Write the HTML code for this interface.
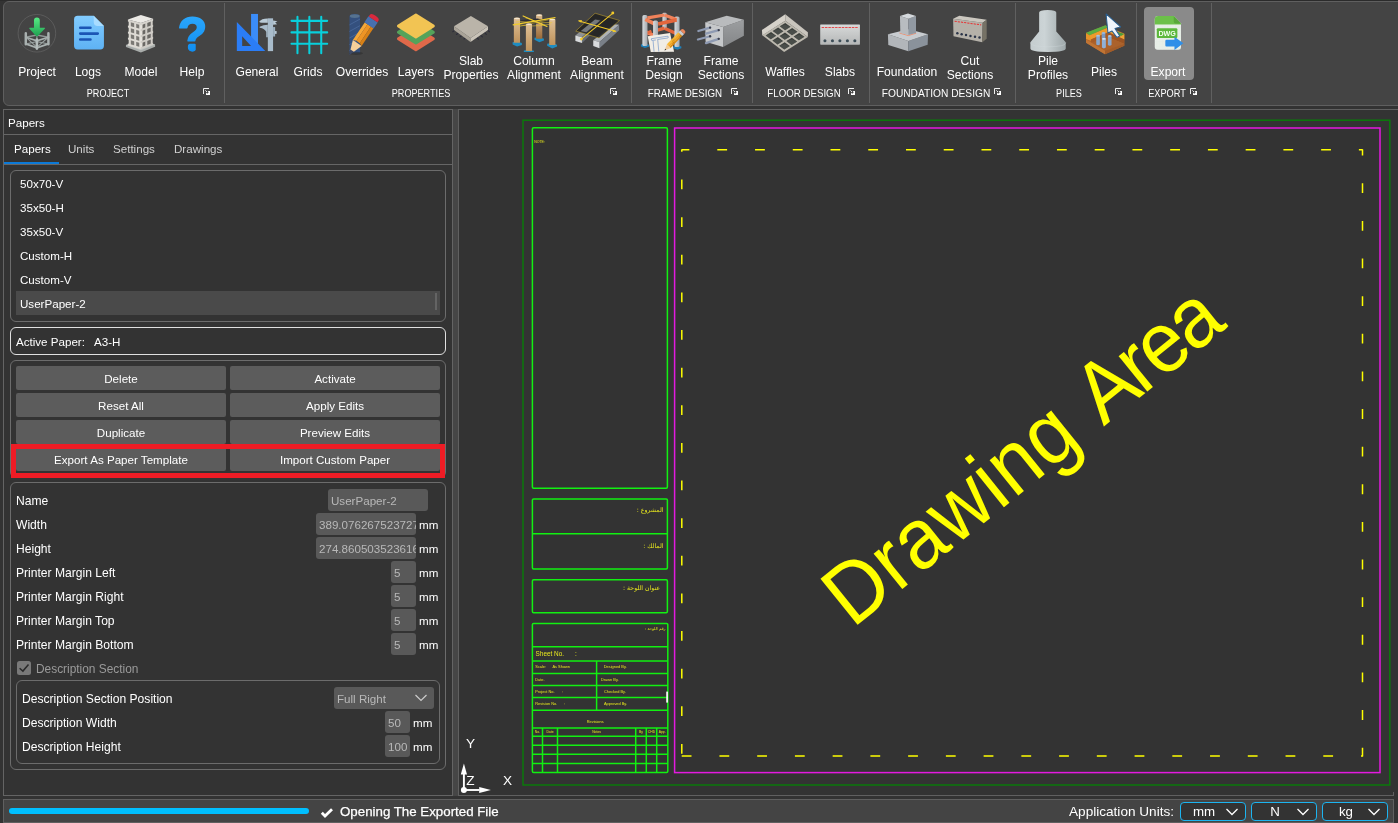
<!DOCTYPE html><html><head><meta charset="utf-8"><title>Papers</title><style>
*{box-sizing:border-box;margin:0;padding:0}
html,body{width:1398px;height:823px;overflow:hidden;background:#333;}
body{position:relative;font-family:"Liberation Sans",sans-serif;font-size:11.6px;color:#fff;}
#root{position:absolute;left:0;top:0;width:1398px;height:823px;will-change:transform}
.abs{position:absolute}
.t{position:absolute;white-space:nowrap;line-height:14px;height:14px}
.c{text-align:center}
.ribbon{position:absolute;left:3px;top:1px;width:1420px;height:105px;background:#444;border:1px solid #5f5f5f;border-radius:6px}
.sep{position:absolute;top:3px;width:1px;height:100px;background:#606060}
.rl{position:absolute;white-space:nowrap;text-align:center;line-height:14px;font-size:12.1px;color:#fff;transform:translateX(-50%)}
.gl{position:absolute;white-space:nowrap;text-align:center;line-height:14px;font-size:10.6px;color:#fff;transform:translateX(-50%) scaleX(0.925);top:86px}
.ico{position:absolute}
.panel{position:absolute;left:3px;top:109px;width:450px;height:687px;border:1px solid #646464;background:#333}
.grp{position:absolute;border:1px solid #6c6c6c;border-radius:6px}
.btn{position:absolute;background:#5c5c5c;border-radius:2px;height:24px;text-align:center;line-height:25px;font-size:11.6px;white-space:nowrap}
.inp{position:absolute;background:#595959;border-radius:3px;height:22px;line-height:23px;color:#b8b8b8;padding-left:3px;overflow:hidden;white-space:nowrap;font-size:11.6px}
.lbl{position:absolute;white-space:nowrap;line-height:14px;font-size:11.6px}
</style></head><body><div id="root">
<div class="abs" style="left:0;top:0;width:1398px;height:1px;background:#2b2b2b"></div>
<div class="ribbon"></div>
<div class="sep" style="left:224px"></div>
<div class="sep" style="left:631px"></div>
<div class="sep" style="left:752px"></div>
<div class="sep" style="left:869px"></div>
<div class="sep" style="left:1015px"></div>
<div class="sep" style="left:1136px"></div>
<div class="sep" style="left:1211px"></div>
<div class="abs" style="left:1144px;top:7px;width:50px;height:73px;background:#8a8a8a;border-radius:4px"></div>
<div class="rl" style="left:37px;top:65px">Project</div>
<div class="rl" style="left:88px;top:65px">Logs</div>
<div class="rl" style="left:141px;top:65px">Model</div>
<div class="rl" style="left:192px;top:65px">Help</div>
<div class="rl" style="left:257px;top:65px">General</div>
<div class="rl" style="left:308px;top:65px">Grids</div>
<div class="rl" style="left:362px;top:65px">Overrides</div>
<div class="rl" style="left:416px;top:65px">Layers</div>
<div class="rl" style="left:471px;top:53.5px">Slab<br>Properties</div>
<div class="rl" style="left:534px;top:53.5px">Column<br>Alignment</div>
<div class="rl" style="left:597px;top:53.5px">Beam<br>Alignment</div>
<div class="rl" style="left:664px;top:53.5px">Frame<br>Design</div>
<div class="rl" style="left:721px;top:53.5px">Frame<br>Sections</div>
<div class="rl" style="left:785px;top:65px">Waffles</div>
<div class="rl" style="left:840px;top:65px">Slabs</div>
<div class="rl" style="left:907px;top:65px">Foundation</div>
<div class="rl" style="left:970px;top:53.5px">Cut<br>Sections</div>
<div class="rl" style="left:1048px;top:53.5px">Pile<br>Profiles</div>
<div class="rl" style="left:1104px;top:65px">Piles</div>
<div class="rl" style="left:1168px;top:65px">Export</div>
<svg class="abs" style="left:0;top:0" width="1398" height="106" viewBox="0 0 1398 106"><defs>
<linearGradient id="gGreen" x1="0" y1="0" x2="0" y2="1"><stop offset="0" stop-color="#56ec84"/><stop offset="1" stop-color="#1f9f50"/></linearGradient>
<linearGradient id="gDoc" x1="0" y1="0" x2="0" y2="1"><stop offset="0" stop-color="#82ccff"/><stop offset="1" stop-color="#5eb2f4"/></linearGradient>
<linearGradient id="gHelp" x1="0" y1="0" x2="0" y2="1"><stop offset="0" stop-color="#30acff"/><stop offset="1" stop-color="#0a88ee"/></linearGradient>
<linearGradient id="gWood" x1="0" y1="0" x2="0" y2="1"><stop offset="0" stop-color="#dfc197"/><stop offset="1" stop-color="#bf935c"/></linearGradient>
<linearGradient id="gWoodD" x1="0" y1="0" x2="0" y2="1"><stop offset="0" stop-color="#dcbc90"/><stop offset="1" stop-color="#9a6a38"/></linearGradient>
<linearGradient id="gSteel" x1="0" y1="0" x2="1" y2="0"><stop offset="0" stop-color="#d9dde0"/><stop offset="1" stop-color="#a4a8ad"/></linearGradient>
<linearGradient id="gConcR" x1="0" y1="0" x2="0" y2="1"><stop offset="0" stop-color="#9c9ea0"/><stop offset="1" stop-color="#848688"/></linearGradient>
<linearGradient id="gSlab" x1="0" y1="0" x2="0" y2="1"><stop offset="0" stop-color="#d8dada"/><stop offset="1" stop-color="#b4b6b6"/></linearGradient>
<linearGradient id="gPile" x1="0" y1="0" x2="1" y2="0"><stop offset="0" stop-color="#c4ccce"/><stop offset=".4" stop-color="#ccd4d6"/><stop offset="1" stop-color="#9ea8aa"/></linearGradient>
</defs><g transform="translate(7 3) scale(0.072904)"><circle cx="410" cy="415" r="258" fill="none" stroke="#636363" stroke-width="10"/><g stroke="#a9b1b0" stroke-width="28" stroke-linecap="round" fill="none"><path d="M258 470L410 440L568 470" stroke="#8f9796" stroke-width="20"/><path d="M410 440V520" stroke="#8f9796" stroke-width="18"/><path d="M258 470L410 520L568 470" stroke-width="24"/><path d="M258 560L410 615L568 560" stroke-width="24"/><path d="M270 480L400 600M400 530L270 560M420 530L555 560M555 480L420 600" stroke-width="14" stroke="#9aa2a1"/><path d="M258 415V565M568 415V565" stroke-width="34"/><path d="M410 500V625" stroke-width="36" stroke="#b4bcbb"/></g><path d="M370 240a40 40 0 0 1 80 0V338H512Q530 338 518 352L422 452Q410 464 398 452L308 352Q296 338 314 338H370Z" fill="url(#gGreen)"/></g>
<g transform="translate(58 3) scale(0.072904)"><path d="M270 175H490L630 315V588a50 50 0 0 1 -50 50H270a50 50 0 0 1 -50 -50V225a50 50 0 0 1 50 -50Z" fill="url(#gDoc)"/><path d="M490 175L630 315H545Q490 315 490 260Z" fill="#a8dcff"/><g stroke="#1b55b5" stroke-width="36" stroke-linecap="round"><path d="M305 340H445M305 420H545M305 500H445"/></g></g>
<g transform="translate(111 3) scale(0.072904)"><polygon points="205,575 410,520 605,570 605,600 410,678 205,605" fill="#a9adab" /><polygon points="205,575 410,520 605,570 410,648" fill="#c0c4c2" /><polygon points="245,240 410,290 410,622 245,572" fill="#7a7874" /><polygon points="410,290 568,232 568,562 410,622" fill="#6a6864" /><polygon points="243,243.08988764044943 272,251.08988764044943 272,581.0898876404494 243,573.0898876404494" fill="#dddad4" /><polygon points="318,264.1573033707865 346,272.1573033707865 346,602.1573033707865 318,594.1573033707865" fill="#dddad4" /><polygon points="470,268.57142857142856 498,258.57142857142856 498,588.5714285714286 470,598.5714285714286" fill="#cfccc6" /><polygon points="545,241.78571428571428 572,231.78571428571428 572,561.7857142857142 545,571.7857142857142" fill="#cfccc6" /><polygon points="388,284 410,290 432,282 432,614 410,622 388,614" fill="#e4e1db" /><polygon points="232,308 410,358 410,386 232,336" fill="#dddad4" /><polygon points="410,358 578,298 578,326 410,386" fill="#cfccc6" /><polygon points="232,392 410,442 410,470 232,420" fill="#dddad4" /><polygon points="410,442 578,382 578,410 410,470" fill="#cfccc6" /><polygon points="232,474 410,524 410,552 232,502" fill="#dddad4" /><polygon points="410,524 578,464 578,492 410,552" fill="#cfccc6" /><polygon points="232,556 410,606 410,634 232,584" fill="#dddad4" /><polygon points="410,606 578,546 578,574 410,634" fill="#cfccc6" /><polygon points="232,225 410,275 578,215 578,245 410,305 232,255" fill="#d6d3cd" /><polygon points="410,165 232,225 410,275 578,215" fill="#ebe9e5" /></g>
<clipPath id="cHelp"><rect x="170" y="5" width="45" height="36.5"/><circle cx="192.4" cy="47.1" r="4.6"/></clipPath><text x="192.5" y="50.7" font-family="Liberation Sans, sans-serif" font-weight="bold" font-size="48" text-anchor="middle" fill="url(#gHelp)" stroke="url(#gHelp)" stroke-width="1.8" stroke-linejoin="round" clip-path="url(#cHelp)">?</text>
<g transform="translate(227 3) scale(0.072904)"><rect x="330" y="150" width="95" height="460" fill="#3b8cf8"/><path d="M135 260V660H525Z M208 455L330 590H208Z" fill="#2b7df6" fill-rule="evenodd"/><rect x="560" y="210" width="72" height="450" fill="#a9bccb"/><path d="M442 258Q470 212 560 212V272H475Q448 272 442 258Z" fill="#b9cad6"/><path d="M448 325Q500 298 560 298V470H538V395Q520 350 448 338Z" fill="#a9bccb"/><path d="M632 240L692 252L660 268L688 290L632 300Z" fill="#b9cad6"/><rect x="632" y="330" width="28" height="130" fill="#9db1c1"/><rect x="655" y="385" width="26" height="38" fill="#b9cad6"/></g>
<g transform="translate(278 3) scale(0.072904)"><g stroke="#08d0dc" stroke-width="28" stroke-linecap="round"><path d="M267 190V690M430 190V690M593 190V690M185 245H675M185 403H675M185 560H675"/></g></g>
<g transform="translate(332 3) scale(0.072904)"><path d="M240 185Q240 150 312 150Q385 150 385 185V690H240Z" fill="#34507e"/><ellipse cx="312" cy="180" rx="68" ry="26" fill="#56728f"/><g stroke="#4a689a" stroke-width="12" fill="none"><path d="M240 300L385 220M240 390L385 310M240 480L385 400M240 570L385 490M240 650L385 575"/></g><ellipse cx="330" cy="690" rx="95" ry="22" fill="#2e2e2e" opacity=".6"/><g transform="translate(235 715) rotate(33.8)"><polygon points="0,0 -28,-75 28,-75" fill="#3f4964"/><polygon points="-28,-75 28,-75 72,-200 -72,-200" fill="#f6cf9a"/><polygon points="-72,-200 -26,-218 -26,-492 -72,-492" fill="#f7a838"/><polygon points="-26,-218 30,-218 30,-492 -26,-492" fill="#ee9424"/><polygon points="30,-218 72,-200 72,-492 30,-492" fill="#d98116"/><rect x="-76" y="-590" width="152" height="100" fill="#4870ae"/><path d="M-72 -590V-615Q-72 -652 0 -652Q72 -652 72 -615V-590Z" fill="#d9293d"/></g></g>
<g transform="translate(386 3) scale(0.072904)"><path d="M410 340L650 490L410 640L170 490Z" fill="#e0694a" stroke="#e0694a" stroke-width="40" stroke-linejoin="round"/><path d="M410 250L650 400L410 550L170 400Z" fill="#55a35a" stroke="#55a35a" stroke-width="40" stroke-linejoin="round"/><path d="M410 165L650 315L410 465L170 315Z" fill="#f2c453" stroke="#f2c453" stroke-width="40" stroke-linejoin="round"/></g>
<g transform="translate(441 3) scale(0.072904)"><line x1="190" y1="372" x2="160" y2="395" stroke="#2c2c3a" stroke-width="14" stroke-linecap="round"/><line x1="243" y1="408" x2="212" y2="432" stroke="#2c2c3a" stroke-width="14" stroke-linecap="round"/><line x1="295" y1="440" x2="263" y2="463" stroke="#2c2c3a" stroke-width="14" stroke-linecap="round"/><line x1="348" y1="472" x2="316" y2="494" stroke="#2c2c3a" stroke-width="14" stroke-linecap="round"/><line x1="640" y1="372" x2="665" y2="395" stroke="#2c2c3a" stroke-width="14" stroke-linecap="round"/><line x1="598" y1="408" x2="622" y2="430" stroke="#2c2c3a" stroke-width="14" stroke-linecap="round"/><line x1="545" y1="443" x2="568" y2="465" stroke="#2c2c3a" stroke-width="14" stroke-linecap="round"/><line x1="492" y1="475" x2="514" y2="497" stroke="#2c2c3a" stroke-width="14" stroke-linecap="round"/><polygon points="178,320 405,480 405,535 178,370" fill="#a9a398" /><polygon points="405,480 645,320 645,370 405,535" fill="#c9c3b8" /><polygon points="410,180 178,320 405,480 645,320" fill="#bab4a9" /></g>
<g transform="translate(504 3) scale(0.072904)"><polygon points="418,478 480,465 548,490 548,515 485,540 418,505" fill="#1f8cc0" /><path d="M440 167Q440 155 482.5 155Q525 155 525 167V490H440Z" fill="url(#gWoodD)"/><ellipse cx="482.5" cy="167" rx="38.5" ry="10" fill="#f3e6d0"/><polygon points="210,238 455,212 645,250 385,292" fill="#2c2c34" /><polygon points="118,540 180,528 245,548 245,575 180,598 118,570" fill="#1f8cc0" /><path d="M135 212Q135 200 177.5 200Q220 200 220 212V545H135Z" fill="url(#gWood)"/><ellipse cx="177.5" cy="212" rx="38.5" ry="10" fill="#f3e6d0"/><polygon points="592,560 660,548 728,572 728,598 662,625 592,588" fill="#1f8cc0" /><path d="M620 227Q620 215 662.5 215Q705 215 705 227V575H620Z" fill="url(#gWood)"/><ellipse cx="662.5" cy="227" rx="38.5" ry="10" fill="#f3e6d0"/><g stroke="#f0cc30" stroke-linecap="round" fill="none"><path d="M125 300L700 200" stroke-width="16"/><path d="M262 178L590 322" stroke-width="16"/><path d="M170 255L655 268M215 320L600 232M300 205L560 300M150 290Q400 340 640 290" stroke-width="7"/></g><polygon points="272,650 340,640 410,655 410,672 272,672" fill="#1f8cc0" /><path d="M300 292Q300 280 342.5 280Q385 280 385 292V660H300Z" fill="url(#gWood)"/><ellipse cx="342.5" cy="292" rx="38.5" ry="10" fill="#f3e6d0"/></g>
<g transform="translate(567 3) scale(0.072904)"><polygon points="115,445 395,215 470,230 205,470" fill="#8e9296" /><polygon points="205,470 470,230 470,300 205,550" fill="#666c74" /><polygon points="115,445 205,470 205,550 115,520" fill="#d9dbdd" /><polygon points="360,510 640,290 715,300 445,535" fill="#aeb2b6" /><polygon points="445,535 715,300 715,375 445,620" fill="#7a8088" /><polygon points="360,510 445,535 445,620 360,590" fill="#d9dbdd" /><polygon points="385,140 720,240 440,480 120,385" fill="#222" fill-opacity=".88" stroke="#e4bc2c" stroke-width="6"/><polygon points="190,385 385,225 455,240 265,400" fill="#8e9296" opacity=".75"/><g stroke="#f2ca2a" stroke-width="14" stroke-linecap="round"><path d="M195 495L630 138M165 248L665 388"/></g><polygon points="150,240 205,232 195,270" fill="#f2ca2a"/><polygon points="680,392 625,400 635,362" fill="#f2ca2a"/><circle cx="628" cy="138" r="20" fill="#f2ca2a"/><circle cx="198" cy="495" r="18" fill="#f2ca2a"/></g>
<g transform="translate(634 3) scale(0.072904)"><rect x="390" y="135" width="60" height="220" rx="20" fill="url(#gSteel)"/><g stroke-linecap="butt"><path d="M425 350L570 415" stroke="#e4663c" stroke-width="48"/><path d="M320 372L420 345" stroke="#e4663c" stroke-width="48"/><path d="M160 395L270 445" stroke="#f0825a" stroke-width="48"/><path d="M160 420L240 385" stroke="#e4663c" stroke-width="40"/></g><polygon points="95,570 150,555 205,572 205,600 150,618 95,598" fill="#1f7fb8" /><polygon points="540,592 595,578 650,596 650,622 595,642 540,620" fill="#1f7fb8" /><rect x="115" y="165" width="70" height="425" rx="22" fill="url(#gSteel)"/><rect x="555" y="185" width="70" height="420" rx="22" fill="url(#gSteel)"/><g><path d="M185 205L420 165" stroke="#f0825a" stroke-width="44"/><path d="M425 168L585 228" stroke="#f0825a" stroke-width="44"/><path d="M155 225L295 292" stroke="#f0825a" stroke-width="52"/><path d="M330 288L585 232" stroke="#e4663c" stroke-width="52"/></g><rect x="262" y="240" width="68" height="230" rx="22" fill="url(#gSteel)"/><polygon points="188,457 495,410 550,668 230,672" fill="#f1ede5" /><g stroke="#4a78c0" stroke-width="7" fill="none"><path d="M235 490L465 455Q478 470 465 480L325 500L340 665M240 495Q232 510 245 515L300 507M262 520L275 668"/></g><g transform="translate(418 652) rotate(44)"><polygon points="0,0 -12,-28 12,-28" fill="#3a3a3a"/><polygon points="-12,-28 12,-28 36,-85 -36,-85" fill="#f3cc98"/><rect x="-36" y="-315" width="24" height="230" fill="#f8b830"/><rect x="-12" y="-315" width="26" height="230" fill="#f3a41a"/><rect x="14" y="-315" width="22" height="230" fill="#dc8c10"/><rect x="-37" y="-350" width="74" height="38" fill="#c9cdd2"/><path d="M-36 -350V-368Q-36 -392 0 -392Q36 -392 36 -368V-350Z" fill="#ea865a"/></g></g>
<g transform="translate(691 3) scale(0.072904)"><polygon points="195,265 440,330 440,605 200,530" fill="#c6c8ca" /><polygon points="440,330 725,230 725,450 440,605" fill="url(#gConcR)" /><polygon points="195,265 490,175 725,230 440,330" fill="#b9bbbd" /><line x1="100" y1="385" x2="262" y2="338" stroke="#8e9ab2" stroke-width="30" stroke-linecap="round"/><circle cx="262" cy="338" r="16" fill="#3a3e4c"/><line x1="205" y1="420" x2="380" y2="372" stroke="#8e9ab2" stroke-width="30" stroke-linecap="round"/><circle cx="380" cy="372" r="16" fill="#3a3e4c"/><line x1="95" y1="500" x2="262" y2="456" stroke="#8e9ab2" stroke-width="30" stroke-linecap="round"/><circle cx="262" cy="456" r="16" fill="#3a3e4c"/><line x1="205" y1="550" x2="380" y2="492" stroke="#8e9ab2" stroke-width="30" stroke-linecap="round"/><circle cx="380" cy="492" r="16" fill="#3a3e4c"/></g>
<g transform="translate(755 3) scale(0.072904)"><polygon points="95,370 415,155 415,245 100,445" fill="#d6d2ca" /><polygon points="415,155 725,400 725,468 415,245" fill="#c9c5bd" /><polygon points="415,242 100,442 400,672 725,466" fill="#bcb8ae" /><polygon points="414.6,273.8 340.9,320.6 412.5,373.3 486.7,326.2" fill="#3b3f3b" /><polygon points="414.2,298.6 340.9,320.6 412.5,373.3 486.7,326.2" fill="#565a55" opacity=".55"/><polygon points="509.9,343.0 435.5,390.2 507.1,442.9 582.1,395.4" fill="#3b3f3b" /><polygon points="509.3,368.0 435.5,390.2 507.1,442.9 582.1,395.4" fill="#565a55" opacity=".55"/><polygon points="605.3,412.2 530.2,459.9 601.8,512.6 677.4,464.6" fill="#3b3f3b" /><polygon points="604.5,437.3 530.2,459.9 601.8,512.6 677.4,464.6" fill="#565a55" opacity=".55"/><polygon points="317.2,335.6 243.5,382.4 314.4,435.5 388.7,388.4" fill="#3b3f3b" /><polygon points="316.6,360.6 243.5,382.4 314.4,435.5 388.7,388.4" fill="#565a55" opacity=".55"/><polygon points="411.6,405.4 337.2,452.6 408.1,505.7 483.1,458.2" fill="#3b3f3b" /><polygon points="410.8,430.4 337.2,452.6 408.1,505.7 483.1,458.2" fill="#565a55" opacity=".55"/><polygon points="506.0,475.2 430.9,522.8 501.8,576.0 577.5,528.0" fill="#3b3f3b" /><polygon points="505.1,500.3 430.9,522.8 501.8,576.0 577.5,528.0" fill="#565a55" opacity=".55"/><polygon points="219.9,397.4 146.2,444.2 216.4,497.8 290.6,450.7" fill="#3b3f3b" /><polygon points="219.1,422.5 146.2,444.2 216.4,497.8 290.6,450.7" fill="#565a55" opacity=".55"/><polygon points="313.3,467.8 238.9,515.0 309.1,568.6 384.0,521.0" fill="#3b3f3b" /><polygon points="312.4,492.9 238.9,515.0 309.1,568.6 384.0,521.0" fill="#565a55" opacity=".55"/><polygon points="406.8,538.1 331.6,585.8 401.8,639.3 477.5,591.4" fill="#3b3f3b" /><polygon points="405.6,563.4 331.6,585.8 401.8,639.3 477.5,591.4" fill="#565a55" opacity=".55"/></g>
<g transform="translate(810 3) scale(0.072904)"><rect x="140" y="295" width="545" height="277" rx="8" fill="url(#gSlab)"/><path d="M160 335H665" stroke="#e64a4a" stroke-width="15" stroke-dasharray="34 12"/><circle cx="205" cy="517" r="21" fill="#3e4e58"/><circle cx="308" cy="517" r="21" fill="#3e4e58"/><circle cx="410" cy="517" r="21" fill="#3e4e58"/><circle cx="513" cy="517" r="21" fill="#3e4e58"/><circle cx="615" cy="517" r="21" fill="#3e4e58"/></g>
<g transform="translate(877 3) scale(0.072904)"><polygon points="150,430 430,520 430,662 155,575" fill="#b2b6ba" /><polygon points="430,520 700,430 695,572 430,662" fill="#8a929b" /><polygon points="150,430 430,360 700,430 430,520" fill="#c8ccd0" /><path d="M308 412L430 447L537 414" stroke="#f08a68" stroke-width="12" fill="none"/><polygon points="315,180 430,215 430,440 320,410" fill="#b8bcc0" /><polygon points="430,215 535,180 535,410 430,440" fill="#9199a2" /><polygon points="315,180 425,145 535,180 430,215" fill="#d4d8dc" /></g>
<g transform="translate(940 3) scale(0.072904)"><polygon points="180,215 585,270 580,537 185,457" fill="#b5b1a9" /><polygon points="180,215 265,175 640,230 585,270" fill="#cbc7bf" /><polygon points="585,270 640,230 640,492 580,537" fill="#767266" /><path d="M200 250L565 300" stroke="#e83434" stroke-width="14" stroke-dasharray="30 14"/><circle cx="238" cy="415" r="17" fill="#2a3448"/><circle cx="297" cy="430" r="17" fill="#2a3448"/><circle cx="357" cy="440" r="17" fill="#2a3448"/><circle cx="418" cy="452" r="17" fill="#2a3448"/><circle cx="480" cy="462" r="17" fill="#2a3448"/><circle cx="542" cy="472" r="17" fill="#2a3448"/></g>
<g transform="translate(1018 3) scale(0.072904)"><path d="M290 130Q290 95 407 95Q525 95 525 130V390L655 540V625Q655 672 412 672Q170 672 170 625V540L290 390Z" fill="url(#gPile)"/><path d="M170 545Q170 600 412 600Q655 600 655 545" stroke="#d2dadc" stroke-width="8" fill="none" opacity=".6"/></g>
<g transform="translate(1074 3) scale(0.072904)"><polygon points="165,410 430,310 690,420 690,585 425,702 165,545" fill="#b5682c" /><polygon points="165,415 240,455 240,520 165,495" fill="#e8952a" /><polygon points="215,440 470,335 470,400 230,500" fill="#ee9a2c" /><polygon points="230,500 470,400 470,470 232,548" fill="#a85c26" /><polygon points="470,335 690,425 690,500 470,400" fill="#f0a234" /><polygon points="470,400 690,500 690,560 470,470" fill="#9c5422" /><polygon points="232,548 470,470 682,560 425,658" fill="#ab622c" /><polygon points="165,500 425,655 425,702 165,545" fill="#c07434" /><polygon points="425,655 690,560 690,585 425,702" fill="#a25c28" /><polygon points="165,408 430,305 475,328 215,442" fill="#5cae42" /><polygon points="600,395 690,425 645,452 590,425" fill="#4e9e3a" /><path d="M380 412V490Q405.0 512 430 490V412Z" fill="#7a9ac4"/><ellipse cx="405.0" cy="412" rx="25.0" ry="13" fill="#9ab8dc"/><path d="M305 448V570Q330.0 592 355 570V448Z" fill="#86a6cc"/><ellipse cx="330.0" cy="448" rx="25.0" ry="13" fill="#a9c4e2"/><path d="M465 452V575Q490.0 597 515 575V452Z" fill="#86a6cc"/><ellipse cx="490.0" cy="452" rx="25.0" ry="13" fill="#a9c4e2"/><path d="M383 492V612Q410.0 634 437 612V492Z" fill="#90b0d6"/><ellipse cx="410.0" cy="492" rx="27.0" ry="13" fill="#dce8f6"/><path d="M440 150L640 328L562 348L628 452L588 472L522 385L466 412Z" fill="#eef4fa" stroke="#2a5f90" stroke-width="14" stroke-linejoin="round"/></g>
<g transform="translate(1138 3) scale(0.072904)"><path d="M275 180H490L590 280V600a40 40 0 0 1 -40 40H270a40 40 0 0 1 -40 -40V225a45 45 0 0 1 45 -45Z" fill="#eef3ee"/><path d="M250 295V640M272 295V640M294 295V640M316 295V640M338 295V640M360 295V640M382 295V640M404 295V640M426 295V640M448 295V640M470 295V640M492 295V640M514 295V640M536 295V640M558 295V640M580 295V640M230 310H590M230 332H590M230 354H590M230 376H590M230 398H590M230 420H590M230 442H590M230 464H590M230 486H590M230 508H590M230 530H590M230 552H590M230 574H590M230 596H590M230 618H590" stroke="#d4e4d6" stroke-width="3" fill="none"/><path d="M275 180H490L590 280V295H230V225a45 45 0 0 1 45 -45Z" fill="#6cc04a"/><path d="M490 180L590 280H520Q490 280 490 250Z" fill="#58a83a"/><rect x="258" y="345" width="282" height="135" rx="16" fill="#5cb83c"/><text x="399" y="448" font-family="Liberation Sans, sans-serif" font-weight="bold" font-size="98" text-anchor="middle" fill="#f4fff0">DWG</text><path d="M390 505H500V462L622 552L500 645V598H390Q375 598 375 583V520Q375 505 390 505Z" fill="#2f8fe8"/></g></svg>
<div class="gl" style="left:107.6px;transform:translateX(-50%) scaleX(0.857)">PROJECT</div>
<svg class="abs" style="left:203px;top:88px" width="8" height="8" viewBox="0 0 8 8"><path d="M0.5 6V0.5H6" fill="none" stroke="#f0f0f0" stroke-width="1"/><path d="M4.6 3H7V7H3V4.6L4.2 5.8L5.8 4.2Z" fill="#fff"/><path d="M2.4 2.4L4 4" stroke="#fff" stroke-width="0.9"/></svg>
<div class="gl" style="left:420.7px;transform:translateX(-50%) scaleX(0.86)">PROPERTIES</div>
<svg class="abs" style="left:610px;top:88px" width="8" height="8" viewBox="0 0 8 8"><path d="M0.5 6V0.5H6" fill="none" stroke="#f0f0f0" stroke-width="1"/><path d="M4.6 3H7V7H3V4.6L4.2 5.8L5.8 4.2Z" fill="#fff"/><path d="M2.4 2.4L4 4" stroke="#fff" stroke-width="0.9"/></svg>
<div class="gl" style="left:684.9px;transform:translateX(-50%) scaleX(0.922)">FRAME DESIGN</div>
<svg class="abs" style="left:731px;top:88px" width="8" height="8" viewBox="0 0 8 8"><path d="M0.5 6V0.5H6" fill="none" stroke="#f0f0f0" stroke-width="1"/><path d="M4.6 3H7V7H3V4.6L4.2 5.8L5.8 4.2Z" fill="#fff"/><path d="M2.4 2.4L4 4" stroke="#fff" stroke-width="0.9"/></svg>
<div class="gl" style="left:803.9px;transform:translateX(-50%) scaleX(0.916)">FLOOR DESIGN</div>
<svg class="abs" style="left:848px;top:88px" width="8" height="8" viewBox="0 0 8 8"><path d="M0.5 6V0.5H6" fill="none" stroke="#f0f0f0" stroke-width="1"/><path d="M4.6 3H7V7H3V4.6L4.2 5.8L5.8 4.2Z" fill="#fff"/><path d="M2.4 2.4L4 4" stroke="#fff" stroke-width="0.9"/></svg>
<div class="gl" style="left:935.7px;transform:translateX(-50%) scaleX(0.962)">FOUNDATION DESIGN</div>
<svg class="abs" style="left:994px;top:88px" width="8" height="8" viewBox="0 0 8 8"><path d="M0.5 6V0.5H6" fill="none" stroke="#f0f0f0" stroke-width="1"/><path d="M4.6 3H7V7H3V4.6L4.2 5.8L5.8 4.2Z" fill="#fff"/><path d="M2.4 2.4L4 4" stroke="#fff" stroke-width="0.9"/></svg>
<div class="gl" style="left:1069.1px;transform:translateX(-50%) scaleX(0.859)">PILES</div>
<svg class="abs" style="left:1115px;top:88px" width="8" height="8" viewBox="0 0 8 8"><path d="M0.5 6V0.5H6" fill="none" stroke="#f0f0f0" stroke-width="1"/><path d="M4.6 3H7V7H3V4.6L4.2 5.8L5.8 4.2Z" fill="#fff"/><path d="M2.4 2.4L4 4" stroke="#fff" stroke-width="0.9"/></svg>
<div class="gl" style="left:1166.8px;transform:translateX(-50%) scaleX(0.867)">EXPORT</div>
<svg class="abs" style="left:1190px;top:88px" width="8" height="8" viewBox="0 0 8 8"><path d="M0.5 6V0.5H6" fill="none" stroke="#f0f0f0" stroke-width="1"/><path d="M4.6 3H7V7H3V4.6L4.2 5.8L5.8 4.2Z" fill="#fff"/><path d="M2.4 2.4L4 4" stroke="#fff" stroke-width="0.9"/></svg>
<div class="panel"></div>
<div class="lbl" style="left:8px;top:116px">Papers</div>
<div class="abs" style="left:4px;top:134px;width:448px;height:1px;background:#666"></div>
<div class="lbl" style="left:14px;top:142px;color:#fff">Papers</div>
<div class="lbl" style="left:68px;top:142px;color:#d0d0d0">Units</div>
<div class="lbl" style="left:113px;top:142px;color:#d0d0d0">Settings</div>
<div class="lbl" style="left:174px;top:142px;color:#d0d0d0">Drawings</div>
<div class="abs" style="left:4px;top:164px;width:448px;height:1px;background:#666"></div>
<div class="abs" style="left:4px;top:162px;width:55px;height:2px;background:#0c7ad8"></div>
<div class="grp" style="left:10px;top:170px;width:436px;height:152px"></div>
<div class="abs" style="left:16px;top:291px;width:424px;height:24px;background:#4a4a4a"></div>
<div class="abs" style="left:435px;top:293px;width:2px;height:17px;background:#646464"></div>
<div class="lbl" style="left:20px;top:177px">50x70-V</div>
<div class="lbl" style="left:20px;top:201px">35x50-H</div>
<div class="lbl" style="left:20px;top:225px">35x50-V</div>
<div class="lbl" style="left:20px;top:249px">Custom-H</div>
<div class="lbl" style="left:20px;top:273px">Custom-V</div>
<div class="lbl" style="left:20px;top:297px">UserPaper-2</div>
<div class="grp" style="left:10px;top:327px;width:436px;height:28px;border-color:#e0e0e0"></div>
<div class="lbl" style="left:16px;top:335px">Active Paper:</div>
<div class="lbl" style="left:94px;top:335px">A3-H</div>
<div class="grp" style="left:10px;top:360px;width:436px;height:118px"></div>
<div class="btn" style="left:16px;top:366px;width:210px">Delete</div>
<div class="btn" style="left:230px;top:366px;width:210px">Activate</div>
<div class="btn" style="left:16px;top:393px;width:210px">Reset All</div>
<div class="btn" style="left:230px;top:393px;width:210px">Apply Edits</div>
<div class="btn" style="left:16px;top:420px;width:210px">Duplicate</div>
<div class="btn" style="left:230px;top:420px;width:210px">Preview Edits</div>
<div class="btn" style="left:16px;top:447px;width:210px">Export As Paper Template</div>
<div class="btn" style="left:230px;top:447px;width:210px">Import Custom Paper</div>
<div class="abs" style="left:11px;top:444px;width:434px;height:34px;border:5px solid #ee1c25"></div>
<div class="grp" style="left:10px;top:482px;width:436px;height:288px"></div>
<div class="lbl" style="left:16px;top:494px;font-size:12.1px">Name</div>
<div class="lbl" style="left:16px;top:518px;font-size:12.1px">Width</div>
<div class="lbl" style="left:16px;top:542px;font-size:12.1px">Height</div>
<div class="lbl" style="left:16px;top:566px;font-size:12.1px">Printer Margin Left</div>
<div class="lbl" style="left:16px;top:590px;font-size:12.1px">Printer Margin Right</div>
<div class="lbl" style="left:16px;top:614px;font-size:12.1px">Printer Margin Top</div>
<div class="lbl" style="left:16px;top:638px;font-size:12.1px">Printer Margin Bottom</div>
<div class="inp" style="left:328px;top:489px;width:100px">UserPaper-2</div>
<div class="inp" style="left:316px;top:513px;width:100px">389.076267523727</div>
<div class="inp" style="left:316px;top:537px;width:100px">274.860503523616</div>
<div class="inp" style="left:391px;top:561px;width:25px">5</div>
<div class="inp" style="left:391px;top:585px;width:25px">5</div>
<div class="inp" style="left:391px;top:609px;width:25px">5</div>
<div class="inp" style="left:391px;top:633px;width:25px">5</div>
<div class="lbl" style="left:419px;top:518px">mm</div>
<div class="lbl" style="left:419px;top:542px">mm</div>
<div class="lbl" style="left:419px;top:566px">mm</div>
<div class="lbl" style="left:419px;top:590px">mm</div>
<div class="lbl" style="left:419px;top:614px">mm</div>
<div class="lbl" style="left:419px;top:638px">mm</div>
<div class="abs" style="left:17px;top:661px;width:14px;height:14px;background:#797979;border-radius:2.5px"></div>
<svg class="abs" style="left:17px;top:661px" width="14" height="14" viewBox="0 0 14 14"><path d="M2.6 7.2L5.9 10.1L11.5 3.4" fill="none" stroke="#2a2a2a" stroke-width="1.5"/></svg>
<div class="lbl" style="left:36px;top:662px;color:#9a9a9a;font-size:11.9px">Description Section</div>
<div class="grp" style="left:16px;top:680px;width:424px;height:84px"></div>
<div class="lbl" style="left:22px;top:692px;font-size:12.1px">Description Section Position</div>
<div class="lbl" style="left:22px;top:716px;font-size:12.1px">Description Width</div>
<div class="lbl" style="left:22px;top:740px;font-size:12.1px">Description Height</div>
<div class="inp" style="left:334px;top:687px;width:100px">Full Right</div>
<svg class="abs" style="left:414px;top:693px" width="14" height="10" viewBox="0 0 14 10"><path d="M1.5 2L7 7.5L12.5 2" fill="none" stroke="#ccc" stroke-width="1.2"/></svg>
<div class="inp" style="left:385px;top:711px;width:25px">50</div>
<div class="inp" style="left:385px;top:735px;width:25px;padding-left:3px">100</div>
<div class="lbl" style="left:413px;top:716px">mm</div>
<div class="lbl" style="left:413px;top:740px">mm</div>
<div class="abs" style="left:453px;top:109px;width:5px;height:687px;background:#464646"></div>
<div class="abs" style="left:458px;top:109px;width:960px;height:687px;border-top:1px solid #606060;border-left:1px solid #606060;background:#333"></div>
<div class="abs" style="left:458px;top:795px;width:936px;height:1px;background:#606060"></div>
<div class="abs" style="left:1393px;top:792px;width:1px;height:4px;background:#606060"></div>
<svg class="abs" style="left:0;top:0" width="1398" height="823" viewBox="0 0 1398 823" font-family="Liberation Sans, sans-serif"><rect x="523" y="120.2" width="866.8" height="664.8" fill="none" stroke="#0b7a0b" stroke-width="1.5"/><rect x="674.6" y="128" width="705.4" height="644.6" fill="none" stroke="#e41ae0" stroke-width="1.5"/><line x1="681.6" y1="149.7" x2="1362.7" y2="149.7" stroke="#ffff00" stroke-width="1.5" stroke-dasharray="9.8 27.94" stroke-dashoffset="2.04"/><line x1="681.7" y1="756.1" x2="1362.7" y2="756.1" stroke="#ffff00" stroke-width="1.5" stroke-dasharray="9.8 27.94" stroke-dashoffset="0.00"/><line x1="681.8" y1="149.6" x2="681.8" y2="756.1" stroke="#ffff00" stroke-width="1.5" stroke-dasharray="9.8 27.83" stroke-dashoffset="7.73"/><line x1="1362.5" y1="149.6" x2="1362.5" y2="756.5" stroke="#ffff00" stroke-width="1.5" stroke-dasharray="9.8 27.83" stroke-dashoffset="3.93"/><g fill="none" stroke="#12f012" stroke-width="1.5"><rect x="532.4" y="127.8" width="135" height="360.4" rx="1.2"/><rect x="532.4" y="498.9" width="135" height="70.1" rx="1.2"/><path d="M532.4 533.8H667.4"/><rect x="532.4" y="579.7" width="135" height="33.1" rx="1.2"/><rect x="532.4" y="623.4" width="135.4" height="149" rx="1.2"/><path d="M532.4 646.7H667.8M532.4 661.1H667.8M532.4 673.5H667.8M532.4 685.6H667.8M532.4 697.6H667.8M532.4 710.2H667.8M532.4 727.9H667.8M532.4 736.3H667.8M532.4 745.3H667.8M532.4 754.3H667.8M532.4 763.4H667.8"/><path d="M596.6 661.1V710.2"/><path d="M542.5 727.9V772.4M557.5 727.9V772.4M635.7 727.9V772.4M646.3 727.9V772.4M656.7 727.9V772.4"/></g><rect x="666.2" y="691.6" width="1.8" height="11" fill="#f4f4f4"/><text x="534.2" y="143.4" font-size="3.5" fill="#e6e61e" text-anchor="start" >NOTE:</text><text x="663.5" y="511.6" font-size="6.2" fill="#e6e61e" text-anchor="start" font-family="DejaVu Sans, sans-serif" direction="rtl">المشروع :</text><text x="663.5" y="547.8" font-size="6.2" fill="#e6e61e" text-anchor="start" font-family="DejaVu Sans, sans-serif" direction="rtl">المالك :</text><text x="660" y="589.6" font-size="6.2" fill="#e6e61e" text-anchor="start" font-family="DejaVu Sans, sans-serif" direction="rtl">عنوان اللوحة :</text><text x="665.5" y="629.6" font-size="4" fill="#e6e61e" text-anchor="start" font-family="DejaVu Sans, sans-serif" direction="rtl">رقم اللوحة :</text><text x="535.6" y="655.8" font-size="6.4" fill="#e6e61e" text-anchor="start" >Sheet No.</text><text x="575" y="655.8" font-size="6.4" fill="#e6e61e" text-anchor="start" >:</text><text x="535.3" y="668" font-size="3.9" fill="#e6e61e" text-anchor="start" >Scale:</text><text x="552.5" y="668" font-size="3.9" fill="#e6e61e" text-anchor="start" >As Shown</text><text x="603.8" y="668" font-size="3.9" fill="#e6e61e" text-anchor="start" >Designed By.</text><text x="535.3" y="680.5" font-size="3.9" fill="#e6e61e" text-anchor="start" >Date.</text><text x="601" y="680.5" font-size="3.9" fill="#e6e61e" text-anchor="start" >Drawn By.</text><text x="535.3" y="692.5" font-size="3.9" fill="#e6e61e" text-anchor="start" >Project No.</text><text x="562" y="692.5" font-size="3.9" fill="#e6e61e" text-anchor="start" >:</text><text x="604" y="692.7" font-size="3.9" fill="#e6e61e" text-anchor="start" >Checked By.</text><text x="535.3" y="704.9" font-size="3.9" fill="#e6e61e" text-anchor="start" >Revision No.</text><text x="564" y="704.9" font-size="3.9" fill="#e6e61e" text-anchor="start" >:</text><text x="604" y="704.9" font-size="3.9" fill="#e6e61e" text-anchor="start" >Approved By.</text><text x="595.2" y="723.3" font-size="3.9" fill="#e6e61e" text-anchor="middle" >Revisions</text><text x="537.4" y="733.2" font-size="3.4" fill="#e6e61e" text-anchor="middle" >No.</text><text x="550" y="733.2" font-size="3.4" fill="#e6e61e" text-anchor="middle" >Date</text><text x="596.6" y="733.2" font-size="3.4" fill="#e6e61e" text-anchor="middle" >Notes</text><text x="641" y="733.2" font-size="3.4" fill="#e6e61e" text-anchor="middle" >By</text><text x="651.5" y="733.2" font-size="3.4" fill="#e6e61e" text-anchor="middle" >CHD</text><text x="662.2" y="733.2" font-size="3.4" fill="#e6e61e" text-anchor="middle" >App.</text><text x="0" y="0" font-size="80.35" fill="#ffff00" transform="translate(852.5 629.05) rotate(-38.86) scale(1 1.07)"><tspan letter-spacing="0.4">Drawing </tspan><tspan dx="2.6" letter-spacing="-3.2">Area</tspan></text><circle cx="463.9" cy="790" r="3" fill="#ffffff"/><path d="M463.9 789V774" stroke="#ffffff" stroke-width="1.9"/><path d="M463.9 763.4L467 774.4H460.8Z" fill="#ffffff"/><path d="M465 790H479.5" stroke="#ffffff" stroke-width="1.9"/><path d="M490.9 790L479.2 793.1V786.9Z" fill="#ffffff"/><text x="470.5" y="748.3" font-size="13.6" fill="#ffffff" text-anchor="middle">Y</text><text x="470.5" y="785.2" font-size="13.6" fill="#ffffff" text-anchor="middle">Z</text><text x="507.5" y="785.3" font-size="13.6" fill="#ffffff" text-anchor="middle">X</text></svg>
<div class="abs" style="left:3px;top:799px;width:1391px;height:24px;background:#444;border:1px solid #606060"></div>
<div class="abs" style="left:9px;top:808px;width:300px;height:6px;background:#00bfff;border-radius:3px"></div>
<svg class="abs" style="left:320px;top:806px" width="14" height="12" viewBox="0 0 14 12"><path d="M1.8 6.8L5 10L12 3.2" fill="none" stroke="#fff" stroke-width="2.8"/></svg>
<div class="lbl" style="left:340px;top:804px;font-size:13.3px;line-height:15px;-webkit-text-stroke:0.25px #fff">Opening The Exported File</div>
<div class="lbl" style="left:1069px;top:804px;font-size:13.6px;line-height:15px">Application Units:</div>
<div class="abs" style="left:1180px;top:802px;width:66px;height:19px;border:1px solid #1cb4f0;border-radius:4px;background:#333"></div>
<div class="lbl c" style="left:1180px;top:804px;width:48px;font-size:13.3px;line-height:15px">mm</div>
<svg class="abs" style="left:1225px;top:807px" width="14" height="10" viewBox="0 0 14 10"><path d="M1.5 2L7 7.5L12.5 2" fill="none" stroke="#fff" stroke-width="1.3"/></svg>
<div class="abs" style="left:1251px;top:802px;width:66px;height:19px;border:1px solid #1cb4f0;border-radius:4px;background:#333"></div>
<div class="lbl c" style="left:1251px;top:804px;width:48px;font-size:13.3px;line-height:15px">N</div>
<svg class="abs" style="left:1296px;top:807px" width="14" height="10" viewBox="0 0 14 10"><path d="M1.5 2L7 7.5L12.5 2" fill="none" stroke="#fff" stroke-width="1.3"/></svg>
<div class="abs" style="left:1322px;top:802px;width:66px;height:19px;border:1px solid #1cb4f0;border-radius:4px;background:#333"></div>
<div class="lbl c" style="left:1322px;top:804px;width:48px;font-size:13.3px;line-height:15px">kg</div>
<svg class="abs" style="left:1367px;top:807px" width="14" height="10" viewBox="0 0 14 10"><path d="M1.5 2L7 7.5L12.5 2" fill="none" stroke="#fff" stroke-width="1.3"/></svg>
</div></body></html>
